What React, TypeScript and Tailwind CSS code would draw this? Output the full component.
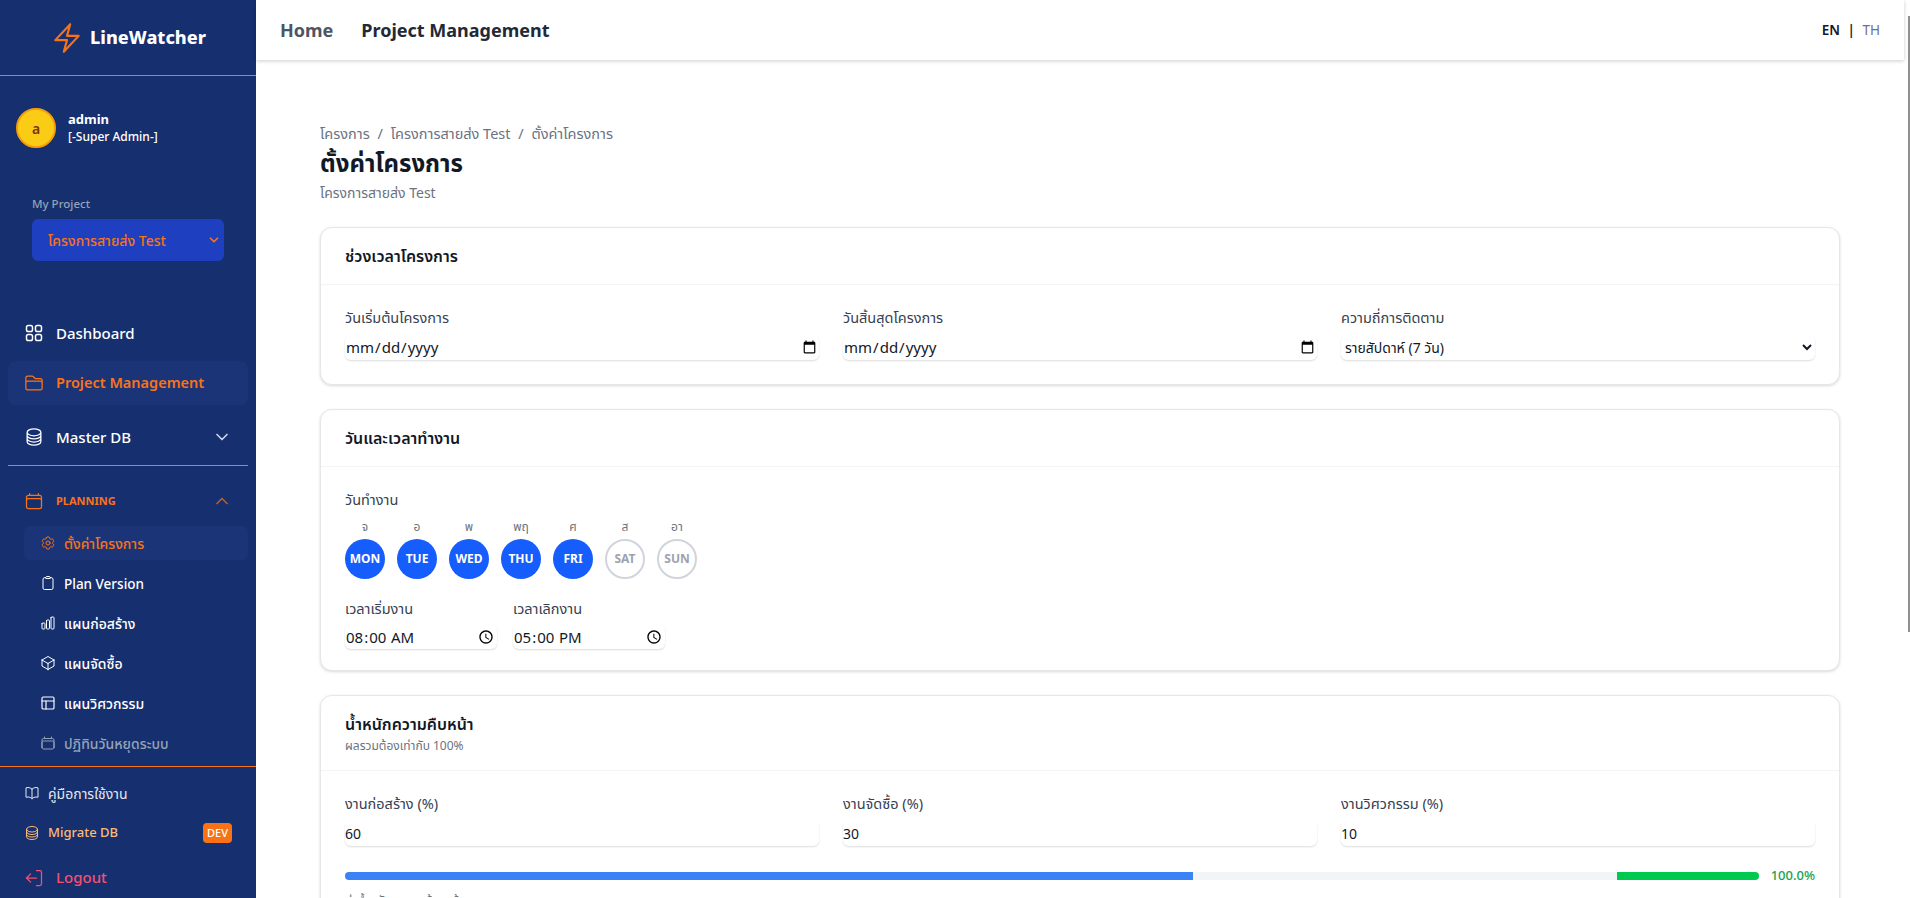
import { ChevronDown, ChevronUp, LogOut, PanelsTopLeft } from 'lucide-react';
import {
  HiOutlineBolt, HiOutlineBookOpen, HiOutlineCalendar, HiOutlineChartBar, HiOutlineCircleStack,
  HiOutlineClipboard, HiOutlineCog6Tooth, HiOutlineCube, HiOutlineFolder,
} from 'react-icons/hi2';
import type { ReactNode } from 'react';

const font = 'font-["Noto_Sans","Noto_Sans_Thai","Noto_Sans_CJK_SC",sans-serif]';

function GridIcon() {
  return (
    <svg viewBox="0 0 20 20" fill="none" stroke="currentColor" strokeWidth="1.5" className="h-5 w-5">
      <rect x="2.5" y="2.5" width="6" height="6" rx="1.8" />
      <rect x="11.5" y="2.5" width="6" height="6" rx="1.8" />
      <rect x="2.5" y="11.5" width="6" height="6" rx="1.8" />
      <rect x="11.5" y="11.5" width="6" height="6" rx="1.8" />
    </svg>
  );
}

function SubItem({ icon, label, active, dim }: { icon: ReactNode; label: ReactNode; active?: boolean; dim?: boolean }) {
  return (
    <div className={`flex h-[34px] items-center gap-2 rounded-md pl-4 text-[14px] font-medium ${active ? 'bg-[#1b3478] text-[#f97316]' : dim ? 'text-[#94a3b8]' : 'text-white'}`}>
      {icon}
      <span>{label}</span>
    </div>
  );
}

function Sidebar() {
  return (
    <aside className="flex h-full w-[256px] shrink-0 flex-col bg-[#162f6f]">
      <div className="flex h-[76px] shrink-0 items-center justify-center gap-[6px] border-b border-[#f97316]">
        <HiOutlineBolt className="h-[34px] w-[34px] text-[#f97316]" />
        <span className="text-[18px] font-extrabold text-white">LineWatcher</span>
      </div>
      <div className="flex items-center gap-3 px-4 pt-[32px]">
        <div className="flex h-10 w-10 items-center justify-center rounded-full border-2 border-[#f59e0b] bg-[#facc15] text-[14px] font-semibold text-[#78350f]">a</div>
        <div className="leading-[18px]">
          <div className="text-[13px] font-bold text-white">admin</div>
          <div className="text-[12px] font-medium text-white">[-Super Admin-]</div>
        </div>
      </div>
      <div className="px-8 pt-[47px]">
        <div className="mb-[7px] text-[11.5px] font-medium text-[#94a3b8]">My Project</div>
        <div className="flex h-[42px] items-center justify-between rounded-md bg-[#1d3fc0] pl-4 pr-[3px] text-[14px] font-medium text-[#f97316]">
          <span>โครงการสายส่ง Test</span>
          <ChevronDown className="h-3.5 w-3.5" strokeWidth={3} />
        </div>
      </div>
      <nav className="flex flex-col px-2 pt-[43px]">
        <div className="flex h-[57px] items-center gap-3 px-4 text-[15px] font-medium text-white">
          <GridIcon />Dashboard
        </div>
        <div className="flex h-[44px] items-center gap-3 rounded-lg bg-[#1b3478] px-4 text-[14.5px] font-semibold text-[#f97316]">
          <HiOutlineFolder className="h-5 w-5" />Project Management
        </div>
        <div className="flex h-[61px] items-center gap-3 border-b border-[#f97316] px-4 pt-[4px] text-[15px] font-medium text-white">
          <HiOutlineCircleStack className="h-5 w-5" />
          <span className="flex-1">Master DB</span>
          <ChevronDown className="h-5 w-5 text-[#cbd5e1]" />
        </div>
        <div className="flex h-[60px] items-center gap-3 px-4 pt-[10px] text-[11px] font-bold text-[#f97316]">
          <HiOutlineCalendar className="h-5 w-5" />
          <span className="flex-1">PLANNING</span>
          <ChevronUp className="h-5 w-5 opacity-70" />
        </div>
        <div className="ml-4 flex flex-col gap-[6px]">
          <SubItem active label="ตั้งค่าโครงการ" icon={<HiOutlineCog6Tooth className="h-4 w-4" />} />
          <SubItem label={<span className="text-[13.5px]">Plan Version</span>} icon={<HiOutlineClipboard className="h-4 w-4" />} />
          <SubItem label="แผนก่อสร้าง" icon={<HiOutlineChartBar className="h-4 w-4" />} />
          <SubItem label="แผนจัดซื้อ" icon={<HiOutlineCube className="h-4 w-4" />} />
          <SubItem label="แผนวิศวกรรม" icon={<PanelsTopLeft className="h-4 w-4" strokeWidth={1.75} />} />
          <SubItem dim label="ปฏิทินวันหยุดระบบ" icon={<HiOutlineCalendar className="h-4 w-4" />} />
        </div>
      </nav>
      <div className="mt-auto border-t border-[#f97316] px-6 pt-[6px]">
        <div className="flex h-[40px] items-center gap-2 text-[14px] text-[#e2e8f0]">
          <HiOutlineBookOpen className="h-4 w-4" />คู่มือการใช้งาน
        </div>
        <div className="flex h-[40px] items-center gap-2 text-[13px] font-medium text-[#fdba74]">
          <HiOutlineCircleStack className="h-4 w-4" />
          <span className="flex-1">Migrate DB</span>
          <span className="rounded bg-[#f97316] px-1 text-[11px] font-medium leading-5 text-white">DEV</span>
        </div>
        <div className="flex h-[45px] items-center gap-3 pt-[4px] text-[15px] font-medium text-[#f4506f]">
          <LogOut className="h-5 w-5 rotate-180" strokeWidth={1.5} />Logout
        </div>
      </div>
    </aside>
  );
}

function Label({ children }: { children: ReactNode }) {
  return <div className="mb-[6px] text-[14.5px] text-[#374151]">{children}</div>;
}

const fieldCls = 'h-[25px] w-full rounded-md bg-white text-[14px] text-[#111827] shadow-[0_1px_2px_rgba(0,0,0,0.14)] outline-none';
const dateCls = 'h-[25px] w-full rounded-md bg-white text-[15px] text-[#111827] shadow-[0_1px_2px_rgba(0,0,0,0.14)] outline-none';

function Card({ title, sub, children }: { title: string; sub?: string; children: ReactNode }) {
  return (
    <section className="rounded-xl border border-[#e5e7eb] bg-white shadow-[0_1px_3px_rgba(0,0,0,0.15)]">
      <div className="border-b border-[#f3f4f6] px-6 py-[15px]">
        <h2 className="text-[16px] font-semibold leading-[26px] text-[#111827]">{title}</h2>
        {sub && <p className="text-[12px] leading-[18px] text-[#6b7280]">{sub}</p>}
      </div>
      <div className="px-6 pt-[22px] pb-6">{children}</div>
    </section>
  );
}

const days = [
  ['จ', 'MON', true], ['อ', 'TUE', true], ['พ', 'WED', true], ['พฤ', 'THU', true], ['ศ', 'FRI', true], ['ส', 'SAT', false], ['อา', 'SUN', false],
] as const;

export default function App() {
  return (
    <div className={`flex h-screen w-full overflow-hidden bg-white ${font}`}>
      <Sidebar />
      <div className="flex min-w-0 flex-1 flex-col">
        <header className="z-10 flex h-[60px] shrink-0 items-center gap-7 bg-white pl-6 pr-6 shadow-[0_1px_4px_rgba(0,0,0,0.2)]">
          <span className="text-[18px] font-bold text-[#4b5563]">Home</span>
          <span className="flex-1 text-[18px] font-bold text-[#1f2937]">Project Management</span>
          <span className="text-[13.5px] font-semibold text-[#111827]">EN <span className="mx-1">|</span> <span className="font-normal text-[#6b7280]">TH</span></span>
        </header>
        <main className="flex-1 overflow-hidden pl-16 pr-16 pt-[63px]">
          <div className="text-[14.5px] leading-5 text-[#6b7280]">โครงการ <span className="mx-1">/</span> โครงการสายส่ง Test <span className="mx-1">/</span> ตั้งค่าโครงการ</div>
          <h1 className="text-[24px] font-bold leading-[40px] text-[#111827]">ตั้งค่าโครงการ</h1>
          <p className="text-[14px] leading-5 text-[#6b7280]">โครงการสายส่ง Test</p>
          <div className="mt-[24px] flex flex-col gap-6">
            <Card title="ช่วงเวลาโครงการ">
              <div className="grid grid-cols-3 gap-6">
                <div><Label>วันเริ่มต้นโครงการ</Label><input type="date" className={dateCls} /></div>
                <div><Label>วันสิ้นสุดโครงการ</Label><input type="date" className={dateCls} /></div>
                <div>
                  <Label>ความถี่การติดตาม</Label>
                  <select defaultValue="7" className={fieldCls}>
                    <option value="7">รายสัปดาห์ (7 วัน)</option>
                  </select>
                </div>
              </div>
            </Card>
            <Card title="วันและเวลาทำงาน">
              <Label>วันทำงาน</Label>
              <div className="flex gap-3">
                {days.map(([th, en, on]) => (
                  <div key={en} className="flex w-10 flex-col items-center">
                    <span className="mb-[2px] text-[12px] leading-5 text-[#6b7280]">{th}</span>
                    <span className={`flex h-10 w-10 items-center justify-center rounded-full text-[12px] font-bold ${on ? 'bg-[#155dfc] text-white' : 'border-2 border-[#d1d5db] text-[#9ca3af]'}`}>{en}</span>
                  </div>
                ))}
              </div>
              <div className="mt-[19px] mb-[-3px] flex gap-4">
                <div className="w-[152px]"><div className="mb-[5px] text-[14.5px] text-[#374151]">เวลาเริ่มงาน</div><input type="time" defaultValue="08:00" className={dateCls} /></div>
                <div className="w-[152px]"><div className="mb-[5px] text-[14.5px] text-[#374151]">เวลาเลิกงาน</div><input type="time" defaultValue="17:00" className={dateCls} /></div>
              </div>
            </Card>
            <Card title="น้ำหนักความคืบหน้า" sub="ผลรวมต้องเท่ากับ 100%">
              <div className="grid grid-cols-3 gap-6">
                <div><Label>งานก่อสร้าง (%)</Label><input type="number" defaultValue={60} className={fieldCls} /></div>
                <div><Label>งานจัดซื้อ (%)</Label><input type="number" defaultValue={30} className={fieldCls} /></div>
                <div><Label>งานวิศวกรรม (%)</Label><input type="number" defaultValue={10} className={fieldCls} /></div>
              </div>
              <div className="mt-[20px] flex items-center gap-3">
                <div className="flex h-2 flex-1 overflow-hidden rounded-full bg-[#f3f4f6]">
                  <div className="w-[60%] bg-[#3b82f6]" />
                  <div className="w-[30%]" />
                  <div className="w-[10%] bg-[#00c950]" />
                </div>
                <span className="text-[13px] font-medium text-[#16a34a]">100.0%</span>
              </div>
              <p className="mt-[5px] text-[12px] leading-5 text-[#6b7280]">ค่าน้ำหนักรวมถูกต้องแล้ว</p>
            </Card>
          </div>
        </main>
      </div>
      <div className="relative w-[6px] shrink-0 bg-white">
        <div className="absolute right-0 top-[16px] h-[616px] w-[2px] bg-[#8f8f8f]" />
      </div>
    </div>
  );
}
